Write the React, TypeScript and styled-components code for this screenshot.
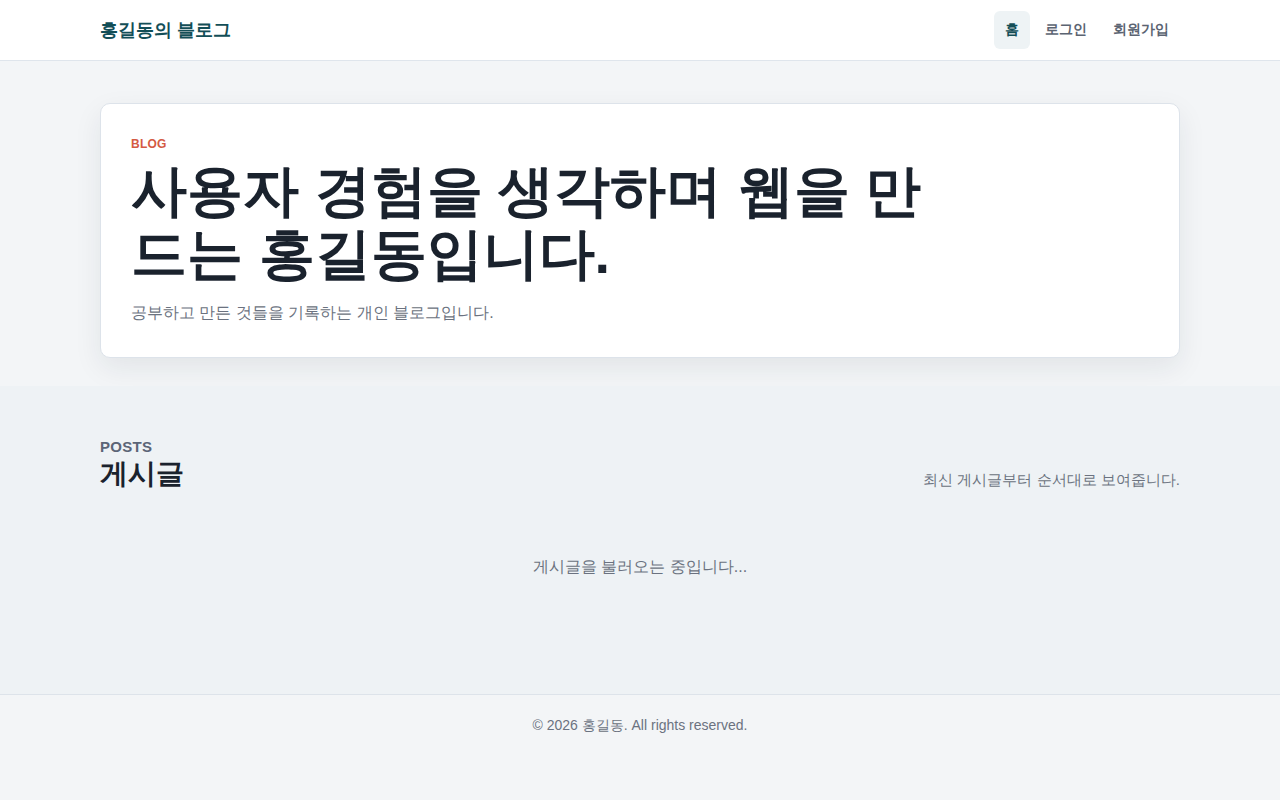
import React from "react";
import styled, { createGlobalStyle } from "styled-components";

const GlobalStyle = createGlobalStyle`
  * {
    box-sizing: border-box;
  }
  body {
    margin: 0;
    background: #f3f5f7;
    font-family: "Liberation Sans", sans-serif;
    color: #1a222d;
  }
`;

const Page = styled.div`
  min-height: 800px;
  display: flex;
  flex-direction: column;
  background: #f3f5f7;
`;

const Header = styled.header`
  height: 61px;
  background: #ffffff;
  border-bottom: 1px solid #dfe5ec;
`;

const Container = styled.div`
  width: 1080px;
  margin: 0 auto;
`;

const HeaderInner = styled(Container)`
  height: 100%;
  display: flex;
  align-items: center;
  justify-content: space-between;
`;

const Logo = styled.a`
  font-size: 18px;
  font-weight: 700;
  color: #134e57;
  text-decoration: none;
`;

const Nav = styled.nav`
  display: flex;
  align-items: center;
  gap: 4px;
`;

const NavLink = styled.a<{ $active?: boolean }>`
  display: flex;
  align-items: center;
  height: 38px;
  padding: 0 11px;
  border-radius: 6px;
  font-size: 14px;
  font-weight: 700;
  text-decoration: none;
  color: ${(p) => (p.$active ? "#134e57" : "#5b6472")};
  background: ${(p) => (p.$active ? "#eef3f5" : "transparent")};
`;

const Hero = styled.section`
  padding: 42px 0 28px;
  background: #f3f5f7;
`;

const Card = styled.div`
  background: #ffffff;
  border: 1px solid #dde3ea;
  border-radius: 10px;
  box-shadow: 0 10px 28px rgba(20, 35, 55, 0.08);
  padding: 33px 30px 33px;
`;

const Eyebrow = styled.div<{ $tone?: "accent" | "muted" }>`
  font-size: ${(p) => (p.$tone === "muted" ? "15px" : "12px")};
  font-weight: 700;
  letter-spacing: 0.02em;
  color: ${(p) => (p.$tone === "muted" ? "#5b6577" : "#d45a43")};
`;

const HeroTitle = styled.h1`
  max-width: 820px;
  margin: 8px 0 18px;
  font-size: 56px;
  line-height: 63px;
  font-weight: 700;
  color: #1a222d;
`;

const HeroText = styled.p`
  margin: 0;
  font-size: 16px;
  color: #6b7280;
`;

const Posts = styled.section`
  flex: 1;
  background: #eef2f5;
  padding: 52px 0 0;
  min-height: 308px;
`;

const PostsHead = styled.div`
  display: flex;
  align-items: flex-end;
  justify-content: space-between;
`;

const PostsTitle = styled.h2`
  margin: 1px 0 0;
  font-size: 28px;
  line-height: 36px;
  font-weight: 700;
  color: #1a222d;
`;

const PostsNote = styled.p`
  margin: 0 0 2px;
  font-size: 15px;
  color: #6b7280;
`;

const Loading = styled.p`
  margin: 65px 0 0;
  text-align: center;
  font-size: 16px;
  color: #6b7280;
`;

const Footer = styled.footer`
  border-top: 1px solid #dde3ea;
  background: #f3f5f7;
  height: 106px;
  padding-top: 22px;
  text-align: center;
  font-size: 14px;
  color: #6b7280;
`;

export default function App() {
  return (
    <>
      <GlobalStyle />
      <Page>
        <Header>
          <HeaderInner>
            <Logo href="#">홍길동의 블로그</Logo>
            <Nav>
              <NavLink href="#" $active>
                홈
              </NavLink>
              <NavLink href="#">로그인</NavLink>
              <NavLink href="#">회원가입</NavLink>
            </Nav>
          </HeaderInner>
        </Header>

        <Hero>
          <Container>
            <Card>
              <Eyebrow>BLOG</Eyebrow>
              <HeroTitle>사용자 경험을 생각하며 웹을 만드는 홍길동입니다.</HeroTitle>
              <HeroText>공부하고 만든 것들을 기록하는 개인 블로그입니다.</HeroText>
            </Card>
          </Container>
        </Hero>

        <Posts>
          <Container>
            <PostsHead>
              <div>
                <Eyebrow $tone="muted">POSTS</Eyebrow>
                <PostsTitle>게시글</PostsTitle>
              </div>
              <PostsNote>최신 게시글부터 순서대로 보여줍니다.</PostsNote>
            </PostsHead>
            <Loading>게시글을 불러오는 중입니다...</Loading>
          </Container>
        </Posts>

        <Footer>© 2026 홍길동. All rights reserved.</Footer>
      </Page>
    </>
  );
}
